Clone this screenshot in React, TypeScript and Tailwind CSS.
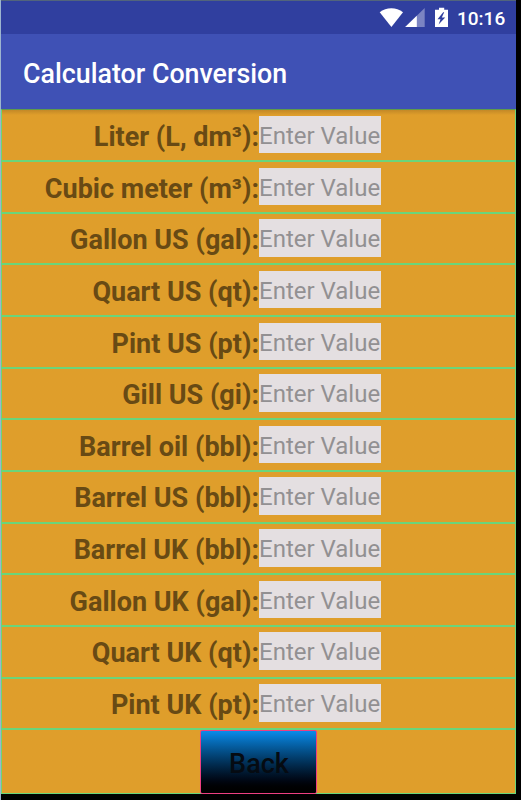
const units = [
  "Liter (L, dm³):",
  "Cubic meter (m³):",
  "Gallon US (gal):",
  "Quart US (qt):",
  "Pint US (pt):",
  "Gill US (gi):",
  "Barrel oil (bbl):",
  "Barrel US (bbl):",
  "Barrel UK (bbl):",
  "Gallon UK (gal):",
  "Quart UK (qt):",
  "Pint UK (pt):",
];

function StatusBar() {
  return (
    <div className="flex h-[34px] items-start border-t border-[#52647c] bg-[#303f9f] pl-[378px]">
      <svg className="mt-[6px] shrink-0" width="77" height="22" viewBox="0 0 77 22">
        <path d="M.7 5.2C7.2-.1 17.5-.1 24 5.2L12.4 20Z" fill="#fff" />
        <path d="M45.7 1V20H26.2Z" fill="#7b84c2" />
        <path d="M37.8 8.7V20H26.2Z" fill="#fff" />
        <path d="M60 .7h5.2v2H69V20H56V2.7H60Z" fill="#fff" />
        <path d="M64.2 5.2 58.5 12.2h3l-1.9 5.3 6.6-7h-3.4l2.4-5.3Z" fill="#303f9f" />
      </svg>
      <span className="ml-px mt-[6px] text-[19px] leading-[24px] font-medium text-white">10:16</span>
    </div>
  );
}

function UnitRow({ label }: { label: string }) {
  return (
    <div className="flex h-[51.67px] items-start border border-[#6bd57a] pt-[5.5px] first:border-t-[#5f9a4b]">
      <div className="w-[257px] shrink-0 whitespace-nowrap pt-[3px] text-right text-[27px] leading-[36px] font-bold text-[#684a14]">
        {label}
      </div>
      <div className="h-[37.5px] w-[122px] shrink-0 whitespace-nowrap bg-[#e4dfe1] text-[24px] leading-[41px] text-[#929092]">
        Enter Value
      </div>
    </div>
  );
}

export default function App() {
  return (
    <div className="h-[800px] w-[521px] overflow-hidden border-l border-[#9db5cf] bg-black font-['Roboto',sans-serif]">
      <div className="w-[515px]">
        <StatusBar />
        <header className="flex h-[75.4px] items-center bg-[#3f51b5] pl-[22px] text-[26.8px] font-medium text-white">
          <h1 className="whitespace-nowrap pt-[5px]">Calculator Conversion</h1>
        </header>
        <main className="bg-linear-to-b from-[#bd8426] to-[#df9e2b] to-[6px]">
          {units.map((label) => (
            <UnitRow key={label} label={label} />
          ))}
          <div className="flex h-[64.5px] border border-[#6bd57a] pl-[198px]">
            <button className="h-[63.5px] w-[117px] shrink-0 rounded-[2px] border border-[#ed3f82] bg-linear-to-b from-[#0b8bea] to-black pt-[4px] pl-px text-[27px] font-medium text-[#050b12]">
              Back
            </button>
          </div>
        </main>
      </div>
    </div>
  );
}
